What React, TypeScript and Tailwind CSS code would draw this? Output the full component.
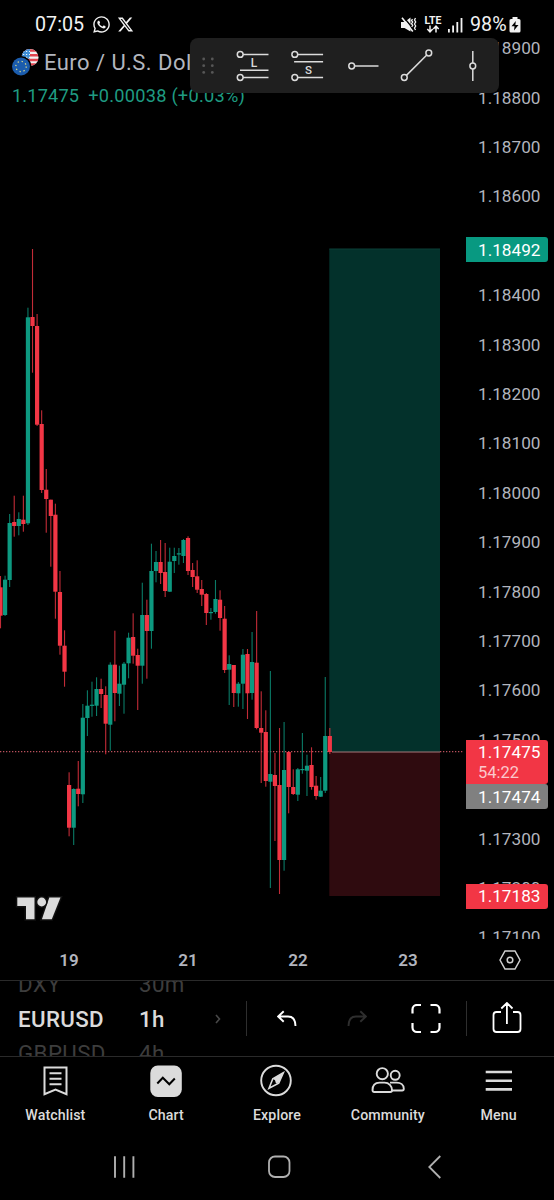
import React from 'react';
import { FaWhatsapp, FaXTwitter } from 'react-icons/fa6';

// [high, body top, body bottom, low, direction] in chart pixels
type Candle = [number, number, number, number, 'u' | 'd'];

const candles: Candle[] = [
  [576, 587.3, 615.7, 628.3, 'd'],
  [575.7, 579.7, 615, 616, 'u'],
  [514, 523, 580, 587, 'u'],
  [495.7, 522, 526, 536.7, 'd'],
  [512.3, 519, 526, 535.3, 'u'],
  [495.7, 519.7, 524, 531.7, 'd'],
  [307.7, 317.3, 523.3, 525, 'u'],
  [249, 317, 326, 372.7, 'd'],
  [314, 326, 424.7, 426, 'd'],
  [410.3, 424, 490, 493, 'd'],
  [469, 489.7, 499, 532.7, 'd'],
  [499.7, 499.7, 516, 566.7, 'd'],
  [503.7, 514.7, 591.7, 618.7, 'd'],
  [571, 592, 645.7, 654.7, 'd'],
  [630.3, 645.7, 671.7, 686.7, 'd'],
  [772.3, 785, 827.7, 836.3, 'd'],
  [788.3, 789, 827.7, 845, 'u'],
  [761, 788.7, 794, 806.3, 'd'],
  [704, 717.7, 794.3, 803, 'u'],
  [690.3, 705.7, 718, 736, 'u'],
  [681.7, 704.7, 705.9, 716.7, 'u'],
  [677.3, 689, 705.7, 716, 'u'],
  [678.7, 689, 694, 708, 'd'],
  [686.3, 695, 723.7, 754.3, 'd'],
  [662.3, 664.7, 724.7, 750.7, 'u'],
  [630.7, 664.7, 693, 721.3, 'd'],
  [665.7, 683.7, 693.7, 706, 'u'],
  [662, 663.7, 684.7, 713.7, 'u'],
  [632.7, 637.7, 663.3, 678.3, 'u'],
  [613.3, 637, 655.7, 663.7, 'd'],
  [648.7, 655, 665.7, 710, 'd'],
  [582.7, 615, 665.7, 683.7, 'u'],
  [599.7, 615, 631, 678.7, 'd'],
  [543.7, 571, 631, 648.7, 'u'],
  [551, 562, 571, 582.3, 'u'],
  [540, 562, 573, 584, 'd'],
  [543, 572, 591, 597, 'd'],
  [547.7, 561.7, 591.7, 592, 'u'],
  [547.7, 556, 561, 573, 'u'],
  [548, 553.3, 554.5, 564.7, 'u'],
  [539, 540, 556, 563, 'u'],
  [536.3, 538, 571, 575, 'd'],
  [563, 570, 577, 587, 'd'],
  [560.3, 576.3, 589.7, 593, 'd'],
  [580, 589, 594.7, 606, 'd'],
  [593, 594, 613, 625, 'd'],
  [608, 612, 613.2, 619.7, 'u'],
  [580, 599, 612, 613.7, 'u'],
  [590.3, 599.7, 618, 630.7, 'd'],
  [606, 618.7, 670, 673, 'd'],
  [655.3, 664, 669.7, 705, 'u'],
  [665, 665, 693, 707, 'd'],
  [682, 683.7, 693.3, 706.7, 'u'],
  [649, 654.7, 683.7, 709, 'u'],
  [649, 654, 693.3, 719, 'd'],
  [632, 662, 693, 699.7, 'u'],
  [611, 662.7, 728, 729.3, 'd'],
  [691.3, 728, 732.7, 783, 'd'],
  [710.3, 732, 781, 786.7, 'd'],
  [671, 774, 781.7, 888, 'u'],
  [753, 775, 786, 841, 'd'],
  [728, 785, 860, 894, 'd'],
  [722, 770, 860, 870.7, 'u'],
  [751.3, 752, 787, 813.3, 'd'],
  [769.3, 787, 794, 795, 'd'],
  [768, 769.3, 794.7, 801, 'u'],
  [733, 769, 770.2, 773.7, 'u'],
  [754.7, 765.7, 770.7, 796, 'u'],
  [747.3, 765, 787, 789.7, 'd'],
  [776, 785.7, 796, 799.7, 'd'],
  [777, 790.7, 796.7, 797, 'u'],
  [677, 736, 790.7, 793, 'u'],
  [728, 736, 752, 754, 'd'],
];

const PITCH = 4.574;

const prices = Array.from({ length: 19 }, (_, i) => ((118900 - i * 100) / 100000).toFixed(5));

// these levels sit fully behind a price tag
const covered = ['1.18500', '1.17400'];

const StatusBar = () => (
  <div className="flex h-[38px] shrink-0 items-center justify-between pl-[35px] pr-[33px] pt-[11px] text-[#f2f2f2]">
    <div className="flex items-center">
      <span className="w-[57px] text-[19.7px] leading-6">07:05</span>
      <FaWhatsapp size={19} />
      <FaXTwitter size={17} className="ml-[6px]" />
    </div>
    <div className="flex items-center">
      <svg width="16" height="16" viewBox="0 0 16 16" fill="none" stroke="currentColor">
        <path d="M0 5h3.5L9.5 0.5v14L3.5 11H0z" fill="currentColor" stroke="none" />
        <path d="M2.5 0L13 12.8" stroke="#000" strokeWidth="1.4" />
        <path d="M1 0.8L11.8 14.5" strokeWidth="1.6" />
        <path d="M11.5 2l-1 1.5 1.2 1.5-1.2 1.7 1.2 1.6-1 1.5M14.5 1l-1 1.9 1.2 2-1.2 2.1 1.2 2-1.2 2.1 1 1.9" strokeWidth="1.3" />
      </svg>
      <div className="ml-[7px] flex w-[18px] flex-col items-center">
        <span className="text-[10.5px] font-bold leading-[9px]">LTE</span>
        <svg width="14" height="8" viewBox="0 0 14 8" fill="none" stroke="currentColor" strokeWidth="1.5">
          <path d="M4 0.5v6M1.3 4L4 6.8 6.7 4M10 7.5v-6M7.3 4L10 1.2 12.7 4" />
        </svg>
      </div>
      <svg className="ml-[6px]" width="15" height="16" viewBox="0 0 15 16" fill="currentColor">
        <rect x="0" y="12" width="1.8" height="3.5" />
        <rect x="4.2" y="8.5" width="1.8" height="7" />
        <rect x="8.4" y="5" width="1.8" height="10.5" />
        <rect x="12.6" y="1" width="1.8" height="14.5" />
      </svg>
      <span className="ml-[7px] w-[39px] text-[19.7px] leading-6">98%</span>
      <svg width="12" height="16" viewBox="0 0 12 16">
        <path d="M3.5 0h5v2H10a1.5 1.5 0 0 1 1.5 1.5V14a1.500 1.500 0 0 1-1.500 1.500H2A1.500 1.500 0 0 1 .5 14V3.500A1.500 1.500 0 0 1 2 2h1.500z" fill="currentColor" />
        <path d="M6.800 4L2.500 9.300h3L5 13.500l4.500-5.600H6.400z" fill="#000" />
      </svg>
    </div>
  </div>
);

const PairFlags = () => (
  <svg width="28" height="28" viewBox="0 0 28 28" className="shrink-0">
    <defs>
      <clipPath id="us">
        <circle cx="18" cy="9.500" r="8.500" />
      </clipPath>
    </defs>
    <g clipPath="url(#us)">
      <rect width="28" height="20" fill="#f3f3f3" />
      <path d="M9 2.500h19M9 7.300h19M9 12h19M9 16.500h19" stroke="#e2444f" strokeWidth="2.400" />
      <rect x="8" y="0" width="10" height="10.500" fill="#3f8fd8" />
      <path d="M11 3.500h7M11 6.500h7M11 9.300h7" stroke="#e8f2fb" strokeWidth="1.200" strokeDasharray="1.200 1.800" />
    </g>
    <circle cx="9" cy="18.500" r="10.500" fill="#000" />
    <circle cx="9" cy="18.500" r="9" fill="#1b5cad" />
    <circle cx="9" cy="18.500" r="5.200" fill="none" stroke="#d9d98a" strokeWidth="1.300" strokeDasharray="1.300 2.784" />
  </svg>
);

const toolClass = 'w-[54.4px] h-[55px]';

const DrawingToolbar = () => (
  <div className="absolute left-[190px] top-0 flex h-[55px] w-[309px] overflow-hidden rounded-[8px] bg-[#1f1f1f]">
    <svg className="h-[55px] w-[37px]" viewBox="190 38 37 55" fill="#575757">
      {[59, 65.7, 72.4].map((y) => (
        <React.Fragment key={y}>
          <circle cx="203.700" cy={y} r="1.400" />
          <circle cx="212.300" cy={y} r="1.400" />
        </React.Fragment>
      ))}
    </svg>
    <svg className={toolClass} viewBox="227 38 54.400 55" fill="none" stroke="#dbdbdb" strokeWidth="1.500">
      <circle cx="240.200" cy="54.400" r="2.900" />
      <circle cx="240.200" cy="77.500" r="2.900" />
      <path d="M243 54.400h25.500M240 70.300h28.500M243 77.500h25.500" />
      <text x="254" y="66.900" textAnchor="middle" fontSize="12" fontWeight="500" fill="#dbdbdb" stroke="none">L</text>
    </svg>
    <svg className={toolClass} viewBox="281.400 38 54.400 55" fill="none" stroke="#dbdbdb" strokeWidth="1.500">
      <circle cx="295.200" cy="54.400" r="2.900" />
      <circle cx="295.200" cy="77.500" r="2.900" />
      <path d="M298 54.400h25.500M294.500 61.700h29M298 77.500h25.500" />
      <text x="309" y="73.700" textAnchor="middle" fontSize="11.500" fontWeight="500" fill="#dbdbdb" stroke="none">S</text>
    </svg>
    <svg className={toolClass} viewBox="335.800 38 54.400 55" fill="none" stroke="#dbdbdb" strokeWidth="1.500">
      <circle cx="351.500" cy="66" r="2.900" />
      <path d="M354.300 66h24" />
    </svg>
    <svg className={toolClass} viewBox="390.200 38 54.400 55" fill="none" stroke="#dbdbdb" strokeWidth="1.500">
      <circle cx="404.500" cy="77.500" r="2.900" />
      <circle cx="429" cy="53" r="2.900" />
      <path d="M406.600 75.400L427 55" />
    </svg>
    <svg className={toolClass} viewBox="444.600 38 54.400 55" fill="none" stroke="#dbdbdb" strokeWidth="1.500">
      <circle cx="472.400" cy="66" r="2.900" />
      <path d="M472.400 51v12.100M472.400 68.900V81" />
    </svg>
  </div>
);

const Plot = () => (
  <svg className="block" width="466" height="902" viewBox="0 38 466 902">
    <rect x="329.300" y="249" width="110.700" height="503" fill="#03312b" />
    <rect x="329.300" y="752" width="110.700" height="144" fill="#2f0b0f" />
    <path d="M329.300 249h110.700" stroke="#0d4139" strokeWidth="1" />
    <path d="M0 751.700H329M440 751.700h24" stroke="#b8505c" strokeWidth="1.300" strokeDasharray="1.300 1.700" />
    {candles.map(([hi, top, bottom, lo, dir], i) => {
      const x = 0.5 + i * PITCH;
      return (
        <g key={i} fill={dir === 'u' ? '#0d9980' : '#f23645'}>
          <rect x={x - 0.55} y={hi} width="1.100" height={lo - hi} opacity="0.800" />
          <rect x={x - 2.1} y={top} width="4.200" height={bottom - top} />
        </g>
      );
    })}
    <path d="M332 752h108" stroke="#a8797a" strokeWidth="1" />
    {/* TradingView mark */}
    <g fill="#dbdbdb" stroke="#101010" strokeWidth="3" paintOrder="stroke">
      <path d="M17.300 897.500h17.200v21.800H26V906h-8.700z" />
      <path d="M49.300 897.500h11.200l-8.700 21.800H41.900z" />
      <circle cx="41.700" cy="902" r="4.400" />
    </g>
  </svg>
);

const tagClass = 'absolute left-0 w-[82px] rounded-r-[3px] pl-[12px] text-white';

const PriceAxis = () => (
  <div className="relative h-[901px] w-[88px] overflow-hidden text-[17.200px] text-[#b2b5be]">
    <div className="-mt-[13.700px] flex flex-col pl-[12px]">
      {prices.map((p) => (
        <span key={p} className="h-[49.400px] leading-[49.400px]">{covered.includes(p) ? '' : p}</span>
      ))}
    </div>
    <div className={`${tagClass} top-[199px] h-[25px] bg-[#089981] leading-[26px]`}>1.18492</div>
    <div className={`${tagClass} top-[701.500px] h-[44.500px] bg-[#f23645] pt-[2px] leading-[21px]`}>
      <div>1.17475</div>
      <div className="text-[16.500px] leading-[19px] text-[#fbc8cc]">54:22</div>
    </div>
    <div className={`${tagClass} top-[746px] h-[25px] bg-[#808080] leading-[26px]`}>1.17474</div>
    <div className={`${tagClass} top-[846px] h-[24.500px] bg-[#f23645] leading-[25px]`}>1.17183</div>
  </div>
);

const TimeAxis = () => (
  <div className="flex h-[41px] shrink-0 items-center border-b border-[#2a2a2a] pl-[9.500px] text-[17px] font-semibold text-[#b2b5be]">
    <span className="mt-px w-[119px] text-center">19</span>
    <span className="mt-px w-[119px] text-center">21</span>
    <span className="mt-px w-[101px] text-center">22</span>
    <span className="mt-px w-[119px] text-center">23</span>
    <svg className="ml-[31px]" width="22" height="20" viewBox="0 0 22 20" fill="none" stroke="#d0d0d0" strokeWidth="1.500">
      <path d="M1 10L6 1h10l5 9-5 9H6z" />
      <circle cx="11" cy="10" r="2.800" />
    </svg>
  </div>
);

const SymbolBar = () => (
  <div className="flex h-[76px] shrink-0 items-center overflow-hidden border-b border-[#2a2a2a] text-[22.300px]">
    <div className="relative flex w-[246px] items-center pt-px">
      <div className="flex w-[121px] flex-col pl-[18px] leading-[34.500px]">
        <span className="tracking-[0.400px] text-[#3d3d3d]">DXY</span>
        <span className="tracking-[0.350px] font-medium text-[#dbdbdb]">EURUSD</span>
        <span className="tracking-[0.400px] text-[#3d3d3d]">GBPUSD</span>
      </div>
      <div className="flex w-[94px] flex-col pl-[18px] leading-[34.500px] tracking-[0.400px]">
        <span className="text-[#3d3d3d]">30m</span>
        <span className="font-medium text-[#dbdbdb]">1h</span>
        <span className="text-[#3d3d3d]">4h</span>
      </div>
      <svg width="6" height="10" viewBox="0 0 6 10" fill="none" stroke="#484848" strokeWidth="1.600">
        <path d="M1 1l3.500 4L1 9" />
      </svg>
    </div>
    <div className="h-[35px] w-px bg-[#2e2e2e]" />
    <svg className="ml-[30px]" width="20" height="18" viewBox="277 1010 20 18" fill="none" stroke="#fff" strokeWidth="1.900">
      <path d="M283.700 1011.300l-5.500 5.200 5.500 5.200M278.500 1016.500h9.500c5 0 7.500 3 7.500 9.500" />
    </svg>
    <svg className="ml-[50px]" width="20" height="18" viewBox="347 1010 20 18" fill="none" stroke="#2e2e2e" strokeWidth="1.900">
      <path d="M360.300 1011.300l5.500 5.200-5.500 5.200M365.500 1016.500H356c-5 0-7.500 3-7.500 9.500" />
    </svg>
    <svg className="ml-[44px]" width="30" height="30" viewBox="411 1004 30 30" fill="none" stroke="#fff" strokeWidth="2.200">
      <path d="M412.500 1013.500v-4a4.500 4.500 0 0 1 4.500-4.500h4M430.500 1005h4.500a4.500 4.500 0 0 1 4.500 4.500v4M439.500 1023v4.500a4.500 4.500 0 0 1-4.500 4.500h-4.500M421 1032h-4a4.500 4.500 0 0 1-4.500-4.500V1023" />
    </svg>
    <div className="ml-[25px] h-[35px] w-px bg-[#2e2e2e]" />
    <svg className="ml-[25px]" width="31" height="34" viewBox="492.500 1002 31 34" fill="none" stroke="#fff" strokeWidth="1.800">
      <path d="M501.500 1012H497a3 3 0 0 0-3 3v14a3 3 0 0 0 3 3h21a3 3 0 0 0 3-3v-14a3 3 0 0 0-3-3h-4.500M507.400 1024v-21M501.800 1008.500l5.600-5.500 5.600 5.500" />
    </svg>
  </div>
);

const tabs = [
  {
    label: 'Watchlist',
    icon: (
      <path d="M5.500 3.500h22v26.700l-11-4.700-11 4.700zM10.500 9.300h12M10.500 14.800h12M10.500 20.300h12" fill="none" stroke="#dbdbdb" strokeWidth="2" />
    ),
  },
  {
    label: 'Chart',
    icon: (
      <>
        <rect x="0.300" y="1.500" width="31.500" height="31.500" rx="7.500" fill="#dbdbdb" />
        <path d="M7.300 19.500l5.500-5.700 6.500 6.500 5.500-5.800" fill="none" stroke="#000" strokeWidth="2" />
      </>
    ),
  },
  {
    label: 'Explore',
    icon: (
      <>
        <circle cx="16" cy="16.500" r="14.800" fill="none" stroke="#dbdbdb" strokeWidth="1.900" />
        <path d="M23.300 8.800L12.800 14.700 9 24.200l9.700-5z" fill="none" stroke="#dbdbdb" strokeWidth="1.600" />
        <path d="M23.800 8.500L12.800 14.700l2.200 1.500 1 3.200 3-1z" fill="#dbdbdb" />
      </>
    ),
  },
  {
    label: 'Community',
    icon: (
      <g fill="none" stroke="#dbdbdb" strokeWidth="1.900">
        <circle cx="11.300" cy="9.700" r="5.600" />
        <circle cx="24.200" cy="11.300" r="4.500" />
        <path d="M1.500 26.300c0-5.200 3-7.700 7-7.700h5c4.500 0 7.500 3.300 7.500 7.700 0 1-.7 1.700-1.700 1.700H3.200c-1 0-1.700-.7-1.700-1.700z" />
        <path d="M19 18.600h6.500c4.300 0 7.300 2.500 7.300 6.200 0 1.100-.6 1.700-1.600 1.700H21" />
      </g>
    ),
  },
  {
    label: 'Menu',
    icon: <path d="M3.700 8H30M3.700 16.700H30M3.700 25.400H30" fill="none" stroke="#dbdbdb" strokeWidth="2.600" />,
  },
];

const TabBar = () => (
  <nav className="grid h-[76px] shrink-0 grid-cols-5 pt-[7px]">
    {tabs.map(({ label, icon }) => (
      <div key={label} className="flex flex-col items-center">
        <svg width="33" height="34" viewBox="0 0 33 34" className="shrink-0 overflow-visible">{icon}</svg>
        <span className="mt-[7px] text-[14.200px] font-medium leading-[20px] tracking-[0.100px] text-[#dbdbdb]">{label}</span>
      </div>
    ))}
  </nav>
);

const SystemNav = () => (
  <div className="ml-[46px] grid h-[67px] w-[465px] shrink-0 grid-cols-3 place-items-center">
    <svg width="24" height="24" viewBox="0 0 24 24" stroke="#b0b0b0" strokeWidth="1.900">
      <path d="M3 1.300v21.400M12.200 1.300v21.400M21.400 1.300v21.400" />
    </svg>
    <svg width="24" height="24" viewBox="0 0 24 24" fill="none" stroke="#b0b0b0" strokeWidth="1.800">
      <rect x="2" y="1.500" width="20.500" height="20.500" rx="6" />
    </svg>
    <svg width="14" height="24" viewBox="0 0 14 24" fill="none" stroke="#b0b0b0" strokeWidth="1.800">
      <path d="M13.300 1L2.300 12l11 11" />
    </svg>
  </div>
);

const App: React.FC = () => {
  return (
    <div className="flex h-[1200px] w-[554px] flex-col overflow-hidden bg-black font-['Roboto',sans-serif]">
      <StatusBar />

      <div className="relative flex h-[902px] shrink-0">
        <Plot />
        <PriceAxis />

        {/* Legend sits on top of the chart */}
        <div className="absolute left-[12px] top-[10px]">
          <div className="flex h-[28px] items-center">
            <PairFlags />
            <span className="ml-[4px] whitespace-nowrap text-[22px] tracking-[0.450px] text-[#b2b5be]">Euro / U.S. Dollar</span>
          </div>
          <div className="mt-[6px] flex gap-[9px] whitespace-nowrap text-[18.200px] leading-[27px] tracking-[0.150px] text-[#1f9b82]">
            <span>1.17475</span>
            <span className="tracking-[0.250px]">+0.00038 (+0.03%)</span>
          </div>
        </div>

        <DrawingToolbar />
      </div>

      <TimeAxis />
      <SymbolBar />
      <TabBar />
      <SystemNav />
    </div>
  );
};

export default App;
